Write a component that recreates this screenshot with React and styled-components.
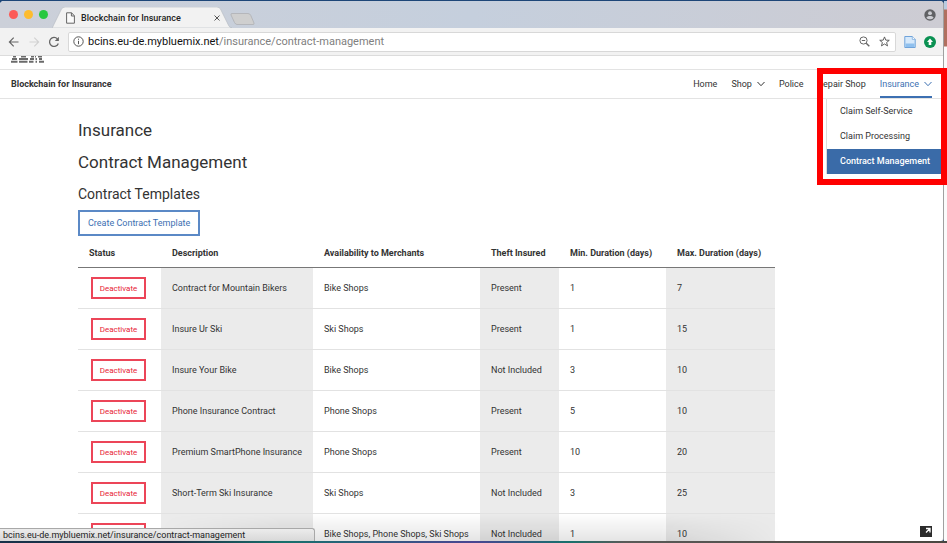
import React from "react"
import styled, { createGlobalStyle, css } from "styled-components"

const plex = `Roboto, "Open Sans", "Liberation Sans", sans-serif`
const system = `Roboto, "Liberation Sans", sans-serif`

const contracts = [
  { description: "Contract for Mountain Bikers", shops: "Bike Shops", theft: true, min: 1, max: 7 },
  { description: "Insure Ur Ski", shops: "Ski Shops", theft: true, min: 1, max: 15 },
  { description: "Insure Your Bike", shops: "Bike Shops", theft: false, min: 3, max: 10 },
  { description: "Phone Insurance Contract", shops: "Phone Shops", theft: true, min: 5, max: 10 },
  { description: "Premium SmartPhone Insurance", shops: "Phone Shops", theft: true, min: 10, max: 20 },
  { description: "Short-Term Ski Insurance", shops: "Ski Shops", theft: false, min: 3, max: 25 },
  { description: "", shops: "Bike Shops, Phone Shops, Ski Shops", theft: false, min: 1, max: 10 },
]

const menuItems = ["Claim Self-Service", "Claim Processing", "Contract Management"]

const Chevron = () => (
  <svg width="8" height="8" viewBox="0 0 8 8" fill="none" stroke="currentColor">
    <path d="M.5 2 4 5.7 7.5 2" />
  </svg>
)

const IbmLogo = () => (
  <svg width="33" height="7" viewBox="0 0 33 7" fill="#6a6a6a" role="img" aria-label="IBM">
    <path d="M2 0h3v1.500H2zM10 0h5v1.500h-5zM20 0h3v1.500h-3zM24 0h1v1.500h-1zM27 0h4v1.500h-4z" />
    <path d="M1 2h5v2H1zM8 2h9v2H8zM19 2h4v2h-4zM24.500 2h1.500v2h-1.500zM28 2h3v2h-3z" />
    <path d="M0 4.700h6.500v2H0zM8 4.700h8.500v2H8zM18 4.700h4.500v2H18zM24.500 4.700h1.500v2h-1.500zM28 4.700h5v2h-5z" />
  </svg>
)

function BrowserTabs() {
  return (
    <TabStrip>
      <Lights>
        <Light color="#fc5b57" aria-label="Close" />
        <Light color="#fdbc2e" aria-label="Minimize" />
        <Light color="#28c840" aria-label="Zoom" />
      </Lights>
      <Tab>
        <TabShape viewBox="0 0 178 22" preserveAspectRatio="none">
          <path d="M0 22C1 21 1 20 2 18L9 3Q10 0 13 0H163Q166 0 167 3L174 18C175 20 175 21 178 22Z" fill="#f2f2f2" stroke="#b4b8bf" strokeWidth=".6" />
        </TabShape>
        <svg width="9" height="12" viewBox="0 0 9 12" fill="#fafafa" stroke="#666">
          <path d="M.6.8H5.6L8.4 3.8V11.2H.6ZM5.4.8V4H8.4" />
        </svg>
        <TabTitle>Blockchain for Insurance</TabTitle>
        <TabClose aria-label="Close tab">
          <svg width="6" height="6" viewBox="0 0 6 6" stroke="#555">
            <path d="m.5.5 5 5m0-5-5 5" />
          </svg>
        </TabClose>
      </Tab>
      <NewTab aria-label="New tab">
        <svg width="25" height="12" viewBox="0 0 25 12">
          <path d="M2 .5H18Q20 .5 20.800 2.500L24 10Q24.500 11.500 23 11.500H7Q5.500 11.500 4.500 9.500L1 2Q.5.5 2 .5Z" fill="#cfcfcf" stroke="#aeb0b4" strokeWidth=".8" />
        </svg>
      </NewTab>
      <Profile aria-label="Profile">
        <svg width="12" height="12" viewBox="0 0 12 12">
          <circle cx="6" cy="6" r="5.7" fill="#606164" />
          <circle cx="6" cy="4.200" r="1.900" fill="#cccdd2" />
          <path d="M2.400 8.800C3 6.500 9 6.500 9.600 8.800 7.800 10.800 4.200 10.800 2.400 8.800Z" fill="#cccdd2" />
        </svg>
      </Profile>
    </TabStrip>
  )
}

function BrowserToolbar() {
  return (
    <Toolbar>
      <ToolButton aria-label="Back">
        <svg width="12" height="12" viewBox="0 0 12 12" fill="none" stroke="#666" strokeWidth="1.200">
          <path d="M10.500 6H1.500M5.700 1.700 1.400 6 5.700 10.300" />
        </svg>
      </ToolButton>
      <ToolButton aria-label="Forward">
        <svg width="12" height="12" viewBox="0 0 12 12" fill="none" stroke="#d2d2d2" strokeWidth="1.200">
          <path d="M1.500 6H10.500M6.300 1.700 10.600 6 6.300 10.300" />
        </svg>
      </ToolButton>
      <ToolButton aria-label="Reload">
        <svg width="12" height="12" viewBox="0 0 12 12" fill="none" stroke="#666" strokeWidth="1.300">
          <path d="M10.300 7.500A4.500 4.500 0 1 1 9.400 2.900" />
          <path d="M10.900.8V4.900H6.800Z" fill="#666" stroke="none" />
        </svg>
      </ToolButton>
      <AddressBar>
        <svg width="11" height="11" viewBox="0 0 11 11" fill="none" stroke="#555">
          <circle cx="5.500" cy="5.500" r="4.700" />
          <path d="M5.500 4.800V8.200M5.500 2.700V3.800" />
        </svg>
        <Url>
          <b>bcins.eu-de.mybluemix.net</b>/insurance/contract-management
        </Url>
        <ToolButton aria-label="Zoom out">
          <svg width="11" height="11" viewBox="0 0 11 11" fill="none" stroke="#666">
            <circle cx="4.500" cy="4.500" r="3.600" />
            <path d="M2.800 4.500H6.200" />
            <path d="M7.200 7.200 10.300 10.300" strokeWidth="1.400" />
          </svg>
        </ToolButton>
        <ToolButton aria-label="Bookmark this page">
          <svg width="11" height="11" viewBox="0 0 12 12" fill="none" stroke="#555">
            <path d="M6 1 7.400 4.500 11.200 4.700 8.300 7.100 9.300 10.800 6 8.700 2.700 10.800 3.700 7.100.8 4.700 4.600 4.500Z" />
          </svg>
        </ToolButton>
      </AddressBar>
      <ToolButton aria-label="Document extension">
        <svg width="12" height="12" viewBox="0 0 12 12">
          <path d="M.8.5H8.300L11.200 3.400V11.500H.8Z" fill="#d6e9fb" stroke="#6fa3da" />
          <path d="M8.300.5V3.400H11.200" fill="#fff" stroke="#6fa3da" strokeWidth=".7" />
          <path d="M1.500 7.500H10.500V11H1.500Z" fill="#8fc0ee" />
        </svg>
      </ToolButton>
      <ToolButton aria-label="Upload extension">
        <svg width="12" height="12" viewBox="0 0 12 12">
          <circle cx="6" cy="6" r="6" fill="#0a9152" />
          <path d="M6 2.600 9 6H7.300V9H4.700V6H3Z" fill="#fff" />
        </svg>
      </ToolButton>
    </Toolbar>
  )
}

function SiteHeader() {
  return (
    <Header>
      <LogoRow>
        <IbmLogo />
      </LogoRow>
      <NavBar>
        <Brand>Blockchain for Insurance</Brand>
        <Nav>
          <NavLink href="#home">Home</NavLink>
          <NavLink href="#shop">
            Shop <Chevron />
          </NavLink>
          <NavLink href="#police">Police</NavLink>
          <NavLink href="#repair-shop">Repair Shop</NavLink>
          <NavLink href="#insurance" $active>
            Insurance <Chevron />
          </NavLink>
        </Nav>
        <Menu>
          {menuItems.map((item, i) => (
            <MenuLink key={item} href="#insurance" $active={i === 2}>
              {item}
            </MenuLink>
          ))}
        </Menu>
      </NavBar>
    </Header>
  )
}

function ContractTable() {
  return (
    <Table>
      <colgroup>
        <Col $w={83} />
        <Col $w={152} />
        <Col $w={167} />
        <Col $w={79} />
        <Col $w={107} />
        <Col $w={109} />
      </colgroup>
      <thead>
        <tr>
          <Th>Status</Th>
          <Th>Description</Th>
          <Th>Availability to Merchants</Th>
          <Th>Theft Insured</Th>
          <Th>Min. Duration (days)</Th>
          <Th>Max. Duration (days)</Th>
        </tr>
      </thead>
      <tbody>
        {contracts.map((c, i) => (
          <tr key={i}>
            <Td $action>
              <DangerButton aria-label="Deactivate">{c.description && "Deactivate"}</DangerButton>
            </Td>
            <Td>{c.description}</Td>
            <Td>{c.shops}</Td>
            <Td>{c.theft ? "Present" : "Not Included"}</Td>
            <Td>{c.min}</Td>
            <Td>{c.max}</Td>
          </tr>
        ))}
      </tbody>
    </Table>
  )
}

export default function App() {
  return (
    <Desktop>
      <GlobalStyle />
      <BrowserWindow>
        <BrowserTabs />
        <BrowserToolbar />
        <Page>
          <SiteHeader />
          <Content>
            <Title>Insurance</Title>
            <Title as="h2">Contract Management</Title>
            <Subtitle>Contract Templates</Subtitle>
            <OutlineButton>Create Contract Template</OutlineButton>
            <ContractTable />
          </Content>
          <BottomShade />
          <StatusBubble>bcins.eu-de.mybluemix.net/insurance/contract-management</StatusBubble>
          <ExpandButton aria-label="Expand">
            <svg width="12" height="11" viewBox="0 0 12 11" fill="none" stroke="#fff" strokeWidth="1.300">
              <path d="M6 2.500H10V6.500M10 2.500 6 6.500" />
            </svg>
          </ExpandButton>
        </Page>
      </BrowserWindow>
      <Highlight />
    </Desktop>
  )
}

const GlobalStyle = createGlobalStyle`
  * {
    box-sizing: border-box;
  }
  body {
    margin: 0;
    font-family: ${plex};
    font-size: 9px;
    color: #333;
  }
  button {
    font-family: inherit;
    padding: 0;
    border: none;
    background: none;
    cursor: pointer;
  }
  svg {
    display: block;
    flex: none;
  }
`

const Desktop = styled.div`
  position: relative;
  height: 100vh;
  padding: 1px 3px 2px 0;
  overflow: hidden;
  background:
    linear-gradient(#1d4678, #1d4678) top / 100% 1px no-repeat,
    linear-gradient(90deg, #17324a 0%, #1f2f45 18%, #17706c 30%, #4a4592 50%, #17706c 60%, #5a5a58 66%, #4a4640 100%) bottom / 100% 2px no-repeat,
    linear-gradient(#b9cbe0 0, #b9cbe0 9px, #b0705f 10px, #b0705f 46px, #fbfbfb 47px) right / 3px 100% no-repeat,
    #1d4678;
`
const BrowserWindow = styled.div`
  display: flex;
  flex-direction: column;
  height: 100%;
  border-right: 1px solid #a0a0a0;
  border-radius: 4px 4px 3px 0;
  overflow: hidden;
  background: white;
`
const TabStrip = styled.div`
  display: flex;
  align-items: flex-end;
  height: 27px;
  flex: none;
  padding: 0 7px 0 9px;
  background: linear-gradient(90deg, #ccd0d9, #c5cfdd 50%, #cdccd3);
`
const Lights = styled.div`
  display: flex;
  gap: 6px;
  padding-bottom: 9px;
`
const Light = styled.button`
  && {
    width: 9px;
    height: 9px;
    border-radius: 50%;
    background: ${({ color }) => color};
  }
`
const Tab = styled.div`
  position: relative;
  display: flex;
  align-items: center;
  width: 180px;
  height: 21px;
  margin-left: 4px;
  padding: 0 12px 0 14px;
  font-family: ${system};
`
const TabShape = styled.svg`
  position: absolute;
  inset: 0;
  width: 100%;
  height: 100%;
  & ~ * {
    position: relative;
  }
`
const TabTitle = styled.span`
  flex: 1;
  margin-left: 6px;
  font-size: 9px;
  font-weight: 500;
  color: #222;
  white-space: nowrap;
`
const TabClose = styled.button`
  width: 6px;
`
const NewTab = styled.button`
  margin: 0 0 3px -2px;
`
const Profile = styled.button`
  margin: 0 0 7px auto;
`
const Toolbar = styled.div`
  display: flex;
  align-items: center;
  gap: 8px;
  height: 28px;
  flex: none;
  padding: 0 7px 0 8px;
  background: #f2f2f2;
  border-bottom: 1px solid #dcdcdc;
`
const ToolButton = styled.button`
  flex: none;
`
const AddressBar = styled.div`
  display: flex;
  flex: 1;
  align-items: center;
  gap: 9px;
  height: 20px;
  padding: 0 5px 0 4px;
  background: white;
  border: 1px solid #d8d8d8;
  border-radius: 2px;
`
const Url = styled.span`
  flex: 1;
  margin-left: -5px;
  font-family: ${system};
  font-size: 11px;
  color: #808080;
  white-space: nowrap;
  b {
    font-weight: 400;
    color: #111;
  }
`
const Page = styled.div`
  position: relative;
  flex: 1;
  min-height: 0;
  overflow: hidden;
`
const Header = styled.header`
  background: white;
`
const LogoRow = styled.div`
  height: 14px;
  padding: 0 11px;
  border-bottom: 1px solid #e3e3e3;
`
const NavBar = styled.div`
  position: relative;
  display: flex;
  justify-content: space-between;
  align-items: center;
  height: 29px;
  padding: 0 11px;
  border-bottom: 1px solid #e3e3e3;
`
const Brand = styled.span`
  font-weight: 700;
`
const Nav = styled.nav`
  display: flex;
  gap: 14px;
  height: 28px;
`
const NavLink = styled.a`
  display: flex;
  align-items: center;
  gap: 5px;
  color: #333;
  text-decoration: none;
  border-top: 2px solid transparent;
  border-bottom: 2px solid transparent;
  ${({ $active }) =>
    $active &&
    css`
      color: #3d70b2;
      border-bottom-color: #3d70b2;
    `}
`
const Menu = styled.div`
  position: absolute;
  top: 29px;
  right: 0;
  width: 117px;
  background: white;
  border-left: 1px solid #dcdcdc;
`
const MenuLink = styled.a`
  display: block;
  padding: 0 13px;
  line-height: 25px;
  color: ${({ $active }) => ($active ? "white" : "#333")};
  background: ${({ $active }) => ($active ? "#3a6ba8" : "white")};
  font-weight: ${({ $active }) => ($active ? 500 : 400)};
  text-decoration: none;
  white-space: nowrap;
`
const Content = styled.main`
  padding: 15px 78px 0;
`
const Title = styled.h1`
  margin: 0;
  font-size: 17px;
  font-weight: 400;
  line-height: 32px;
`
const Subtitle = styled.h3`
  margin: 0;
  font-size: 14px;
  font-weight: 400;
  line-height: 32px;
`
const OutlineButton = styled.button`
  && {
    display: block;
    height: 26px;
    padding: 0 8px;
    font-size: 9px;
    color: #3d70b2;
    border: 2px solid #5b89c6;
  }
`
const Table = styled.table`
  table-layout: fixed;
  width: 697px;
  margin-top: 3px;
  border-collapse: separate;
  border-spacing: 0;
`
const Col = styled.col`
  width: ${({ $w }) => $w}px;
`
const Th = styled.th`
  height: 29px;
  padding: 0 11px;
  text-align: left;
  font-weight: 700;
  white-space: nowrap;
  border-bottom: 1px solid #777;
`
const Td = styled.td`
  height: 41px;
  padding: 0 ${({ $action }) => ($action ? 13 : 11)}px;
  white-space: nowrap;
  border-bottom: 1px solid #e2e2e2;
  &:nth-child(even) {
    background: #ebebeb;
  }
`
const DangerButton = styled.button`
  && {
    display: block;
    width: 55px;
    height: 22px;
    font-size: 8px;
    color: #e71d36;
    border: 2px solid #ec4558;
  }
`
const BottomShade = styled.div`
  position: absolute;
  left: 17%;
  right: 17%;
  bottom: 0;
  height: 28px;
  background: linear-gradient(transparent, rgba(0, 0, 0, 0.1));
  mask-image: linear-gradient(90deg, transparent, black 20%, black 80%, transparent);
  pointer-events: none;
`
const StatusBubble = styled.div`
  position: absolute;
  left: 0;
  bottom: 0;
  width: 315px;
  height: 13px;
  padding-left: 3px;
  font-family: ${system};
  font-size: 9px;
  line-height: 12px;
  color: #222;
  background: linear-gradient(#ececec, #d8d8d8);
  border: solid #a8a8a8;
  border-width: 1px 1px 0 0;
  border-radius: 0 3px 0 0;
`
const ExpandButton = styled.button`
  && {
    position: absolute;
    right: 11px;
    bottom: 4px;
    background: #2b2b2b;
  }
`
const Highlight = styled.div`
  position: absolute;
  top: 68px;
  right: 0;
  width: 130px;
  height: 117px;
  border: 6px solid #fe0000;
  pointer-events: none;
`
